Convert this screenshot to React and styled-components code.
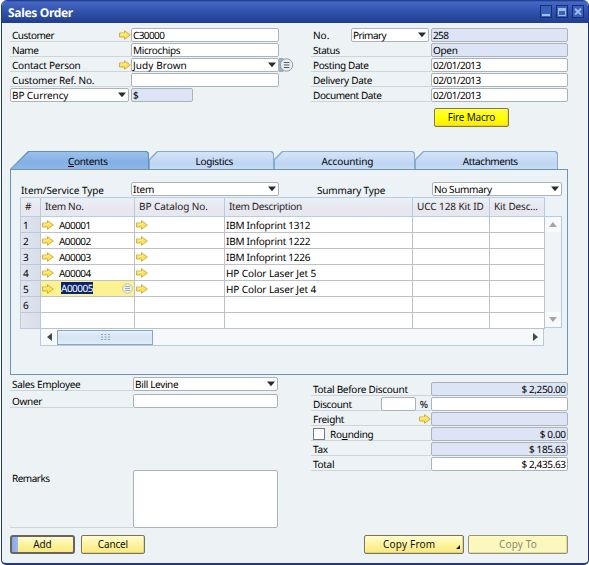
import React from "react";
import styled, { createGlobalStyle, css } from "styled-components";

const Global = createGlobalStyle`
  *, *::before, *::after { box-sizing: border-box; }
  body { margin: 0; background: #fff; overflow: hidden; }
`;

const Window = styled.div`
  width: 588px;
  height: 565px;
  margin-left: 1px;
  display: flex;
  flex-direction: column;
  background: #edf2f5;
  border: 1px solid #22397f;
  border-top: 0;
  border-bottom-width: 2px;
  border-radius: 6px 6px 5px 5px;
  overflow: hidden;
  font-family: "Noto Sans", "Open Sans", sans-serif;
  font-size: 10px;
  line-height: 14px;
  color: #000;
  white-space: nowrap;
  text-rendering: geometricPrecision;
`;

const TitleBar = styled.header`
  height: 23px;
  flex: none;
  display: flex;
  align-items: center;
  justify-content: space-between;
  padding: 2px 4px 0 6px;
  background: linear-gradient(#16307c 0, #4768c4 2px, #3a5cb8 30%, #2c4da4 65%, #213d8e 100%);
`;

const Title = styled.h1`
  margin: 0;
  font-size: 12px;
  line-height: 18px;
  font-weight: 700;
  letter-spacing: -0.32px;
  color: #fff;
`;

const WindowControls = styled.div`
  display: flex;
  gap: 4px;
  margin-top: -2px;
`;

const ControlButton = styled.button`
  width: 12px;
  height: 13px;
  padding: 0;
  display: grid;
  place-items: center;
  border: 1px solid #172f78;
  background: #3a60b8;
  svg { display: block; }
`;

const Text = styled.span`
  letter-spacing: ${(p) => p.$track ?? -0.3}px;
  margin-right: ${(p) => -(p.$track ?? -0.3)}px;
`;

const HeaderSection = styled.section`
  height: 128px;
  flex: none;
  display: flex;
  justify-content: space-between;
  padding: 5px 20px 0 8px;
`;

const LeftForm = styled.div`
  display: grid;
  grid-template-columns: 121px 148px 15px;
  grid-auto-rows: 14px;
  row-gap: 1px;
  align-content: start;
`;

const RightForm = styled.div`
  width: 257px;
  display: flex;
  flex-direction: column;
`;

const RightRow = styled.div`
  display: grid;
  grid-template-columns: 120px 137px;
  height: 14px;
  margin-bottom: 1px;
`;

const Label = styled.label`
  height: 14px;
  display: flex;
  align-items: center;
  justify-content: space-between;
  padding-left: ${(p) => p.$indent ?? 2}px;
  padding-top: 1px;
  line-height: 14px;
  border-bottom: 1px solid ${(p) => (p.$plain ? "transparent" : "#ccd5dc")};
`;

const Field = styled.div`
  height: 14px;
  width: ${(p) => (p.$width ? `${p.$width}px` : "auto")};
  display: flex;
  align-items: center;
  justify-content: ${(p) => (p.$right ? "flex-end" : "flex-start")};
  padding: 0 1px;
  line-height: 12px;
  border: 1px solid #aab3ba;
  border-radius: 2px;
  background: ${(p) => (p.$locked ? "#dce4f5" : "#fff")};
`;

const SelectBox = styled(Field)`
  justify-content: space-between;
`;

const Caret = styled.svg`
  display: block;
  flex: none;
  margin-top: -1px;
`;

const GripButton = styled.div`
  width: 15px;
  height: 14px;
  display: flex;
`;

const NoGroup = styled.div`
  display: flex;
  justify-content: space-between;
  padding-right: 2px;
`;

const buttonFace = {
  yellow: css`background: linear-gradient(#fffbd0, #fdf3a0 50%, #fbe978);`,
  macro: css`background: linear-gradient(#ffff40, #ffff00 55%, #ffe800); border-color: #8a7c1e;`,
  disabled: css`background: #fcf8bd; color: #8b8a6c; border-color: #94937a;`,
};

const PushButton = styled.button`
  width: ${(p) => p.$width}px;
  height: 19px;
  padding: 0 0 2px;
  display: flex;
  align-items: center;
  justify-content: center;
  font: inherit;
  color: #111;
  border: 1px solid #77735a;
  border-radius: 2px;
  ${(p) => buttonFace[p.$face || "yellow"]}
  box-shadow: inset 0 0 0 1px rgba(255, 255, 210, 0.35), inset -1px -1px 0 rgba(120, 105, 30, 0.35);
`;

const DefaultButton = styled(PushButton)`
  border: 2px solid #66655f;
  border-radius: 3px;
  background: linear-gradient(90deg, #88a9e4 0, #9dbaf0 6px, transparent 6px),
    linear-gradient(#fffbd0, #fdf3a0 50%, #fbe978);
  box-shadow: none;
`;

const MenuButton = styled(PushButton)`
  justify-content: space-between;
  padding: 0 3px 2px 18px;
  svg { align-self: flex-end; margin-bottom: 2px; }
`;

const MacroRow = styled.div`
  display: flex;
  padding: 5px 0 0 123px;
`;

const TabBar = styled.nav`
  height: 18px;
  flex: none;
  display: flex;
  margin-left: 8px;
`;

const Tab = styled.div`
  --slant: ${(p) => (p.$active ? "18px" : "8px")};
  --drop: ${(p) => (p.$active ? "100%" : "8px")};
  position: relative;
  width: ${(p) => p.$width}px;
  height: 18px;
  display: flex;
  justify-content: center;
  padding-left: ${(p) => p.$shift || 0}px;
  line-height: 21px;
  isolation: isolate;
  &::before, &::after {
    content: "";
    position: absolute;
    z-index: -1;
    clip-path: polygon(0 var(--drop), var(--slant) 0, calc(100% - 2px) 0, 100% 2px, 100% 100%, 0 100%);
  }
  &::before { inset: 0; background: ${(p) => (p.$active ? "#5f8fbd" : "#86abcd")}; }
  &::after {
    inset: 1px 1px 0 1px;
    background: ${(p) =>
      p.$active ? "linear-gradient(#9cc0eb, #84b0e5 60%, #8fb6e6)" : "linear-gradient(#d5e4f8, #bdd5f3 70%, #c8dcf5)"};
  }
`;

const Panel = styled.section`
  width: 558px;
  height: 206px;
  flex: none;
  margin-left: 8px;
  padding: 12px 5px 0 9px;
  border: 1px solid #6d94b4;
  background: #ecf2f6;
`;

const FilterRow = styled.div`
  display: flex;
  height: 14px;
`;

const FilterLabel = styled(Label)`
  width: ${(p) => p.$width}px;
  padding-top: 1px;
  border-bottom: 0;
`;

const GridArea = styled.div`
  display: flex;
  margin-top: 1px;
`;

const COLUMNS = "20px 94px 90px 188px 77px 55px";

const Grid = styled.div`
  width: 525px;
`;

const GridRows = styled.div`
  border-left: 1px solid #b9cde3;
`;

const HeadRow = styled.div`
  display: grid;
  grid-template-columns: ${COLUMNS};
  height: 20px;
  border-top: 1px solid #b9cde3;
  background: linear-gradient(#eaf0f7, #e9e6ee 55%, #e4e9f2);
`;

const HeadCell = styled.div`
  padding-left: 4px;
  line-height: 17px;
  color: #222;
  border-right: 1px solid #b5cbe4;
  border-bottom: 1px solid #b9cde3;
`;

const BodyRow = styled.div`
  display: grid;
  grid-template-columns: ${COLUMNS};
  height: 16px;
`;

const Cell = styled.div`
  display: flex;
  align-items: center;
  padding-left: 1px;
  line-height: 14px;
  background: ${(p) => (p.$active ? "#fcf292" : "#fff")};
  border-right: 1px solid #bcc2c8;
  border-bottom: 1px solid #bcc2c8;
`;

const RowNumber = styled(Cell)`
  padding-left: 2px;
  background: linear-gradient(90deg, #e3e4ee, #d7deea);
  border-color: #b9c8dc;
`;

const ItemText = styled(Text)`
  margin-left: 5px;
`;

const SelectedText = styled(Text)`
  height: 12px;
  margin: -2px 0 0 7px;
  line-height: 12px;
  background: #0a246a;
  color: #fff;
`;

const CellGrip = styled.svg`
  margin: 0 1px 0 auto;
`;

const VerticalTrack = styled.div`
  width: 17px;
  height: 112px;
  margin-top: 19px;
  display: flex;
  flex-direction: column;
  justify-content: space-between;
  border: 1px solid #b5cbe4;
  border-left: 0;
  background: #f0f4f9;
`;

const TrackEnd = styled.div`
  width: 16px;
  height: 15px;
  display: grid;
  place-items: center;
  background: #f8f9fb;
`;

const HorizontalTrack = styled.div`
  width: 504px;
  height: 17px;
  margin-left: 20px;
  display: flex;
  align-items: center;
  border: 1px solid #b5cbe4;
  border-top: 0;
  background: #f6f8fc;
`;

const TrackGap = styled.div`
  flex: 1;
`;

const Thumb = styled.div`
  width: 96px;
  height: 15px;
  display: grid;
  place-items: center;
  border: 1px solid #8aa6c4;
  background: linear-gradient(#e6effa, #d5e3f4 50%, #e2ecf8);
`;

const FooterSection = styled.section`
  flex: 1;
  display: flex;
  justify-content: space-between;
  padding: 2px 20px 0 8px;
`;

const FooterForm = styled.div`
  display: grid;
  grid-template-columns: 123px 145px;
  grid-template-rows: 14px 14px 58px;
  align-content: start;
  row-gap: 3px;
`;

const RemarksLabel = styled(Label)`
  height: 58px;
  margin-top: 59px;
  align-items: flex-start;
`;

const RemarksBox = styled.div`
  height: 58px;
  margin-top: 59px;
  background: #fff;
  border: 1px solid #aab3ba;
  border-radius: 2px;
`;

const Totals = styled.div`
  width: 257px;
  padding-top: 5px;
`;

const DiscountGroup = styled.div`
  display: flex;
  align-items: center;
  gap: 4px;
  margin-right: 3px;
`;

const CheckLabel = styled.div`
  display: flex;
  align-items: center;
  gap: 5px;
`;

const Checkbox = styled.span`
  width: 12px;
  height: 12px;
  border: 1px solid #777b80;
  background: #fff;
`;

const ButtonBar = styled.footer`
  height: 29px;
  flex: none;
  display: flex;
  justify-content: space-between;
  padding: 1px 20px 0 8px;
`;

const ButtonGroup = styled.div`
  display: flex;
  gap: ${(p) => p.$gap}px;
`;

function LinkArrow() {
  return (
    <svg width="12" height="10" viewBox="0 0 12 10">
      <path d="M.5 3h5V.7L11.3 5 5.5 9.3V7h-5z" fill="#fbe35c" stroke="#cfa63a" strokeWidth=".9" />
      <path d="M1.5 4h5V3" fill="none" stroke="#fff9b8" strokeWidth=".8" />
    </svg>
  );
}

function Select({ children, track, width }) {
  return (
    <SelectBox $width={width}>
      <Text $track={track}>{children}</Text>
      <Caret width="9" height="6" viewBox="0 0 9 6">
        <path d="M0 .5h8L4 5.2z" fill="#262b33" />
      </Caret>
    </SelectBox>
  );
}

function TotalRow({ label, track, value, valueTrack, locked, extra }) {
  return (
    <RightRow>
      <Label>
        {label && <Text $track={track}>{label}</Text>}
        {extra}
      </Label>
      <Field $right $locked={locked}>
        <Text $track={valueTrack}>{value}</Text>
      </Field>
    </RightRow>
  );
}

const dates = [
  ["Posting Date", -0.38],
  ["Delivery Date", -0.28],
  ["Document Date", -0.42],
];

const items = [
  { no: "A00001", name: "IBM Infoprint 1312", track: -0.25 },
  { no: "A00002", name: "IBM Infoprint 1222", track: -0.25 },
  { no: "A00003", name: "IBM Infoprint 1226", track: -0.25 },
  { no: "A00004", name: "HP Color Laser Jet 5", track: -0.1 },
  { no: "A00005", name: "HP Color Laser Jet 4", track: -0.1, active: true },
  {},
  {},
];

export default function App() {
  return (
    <>
      <Global />
      <Window>
        <TitleBar>
          <Title>Sales Order</Title>
          <WindowControls>
            <ControlButton aria-label="Minimize">
              <svg width="10" height="11" viewBox="0 0 10 11"><path d="M1 9h8" stroke="#9dbcf0" strokeWidth="2" /></svg>
            </ControlButton>
            <ControlButton aria-label="Maximize">
              <svg width="10" height="11" viewBox="0 0 10 11">
                <path d="M1.5 2.5h7v7h-7z" fill="none" stroke="#9dbcf0" />
                <path d="M1 3.5h8" stroke="#9dbcf0" strokeWidth="3" />
              </svg>
            </ControlButton>
            <ControlButton aria-label="Close">
              <svg width="10" height="11" viewBox="0 0 10 11"><path d="M2 2.8l6 5.8m0-5.8l-6 5.8" stroke="#9dbcf0" strokeWidth="2" /></svg>
            </ControlButton>
          </WindowControls>
        </TitleBar>

        <HeaderSection>
          <LeftForm>
            <Label><Text $track={-0.5}>Customer</Text><LinkArrow /></Label>
            <Field><Text $track={-0.6}>C30000</Text></Field>
            <span />
            <Label><Text $track={-0.45}>Name</Text></Label>
            <Field><Text $track={-0.38}>Microchips</Text></Field>
            <span />
            <Label><Text $track={-0.22}>Contact Person</Text><LinkArrow /></Label>
            <Select track={0.08}>Judy Brown</Select>
            <GripButton>
              <svg width="15" height="14" viewBox="0 0 15 14">
                <path d="M0 0h4.5v14H0z" fill="#a3adb8" />
                <circle cx="7.6" cy="7" r="6.2" fill="#e9eef3" stroke="#8e9bab" />
                <path d="M4.8 4.5h5.6M4.8 7h5.6M4.8 9.5h5.6" stroke="#4b5662" />
              </svg>
            </GripButton>
            <Label><Text $track={-0.18}>Customer Ref. No.</Text></Label>
            <Field />
            <span />
            <Select width={119} track={-0.1}>BP Currency</Select>
            <Field $locked $width={62}><Text>$</Text></Field>
          </LeftForm>

          <RightForm>
            <RightRow>
              <NoGroup>
                <Label $plain><Text $track={0}>No.</Text></Label>
                <Select width={78} track={-0.55}>Primary</Select>
              </NoGroup>
              <Field $locked><Text $track={-0.6}>258</Text></Field>
            </RightRow>
            <RightRow>
              <Label><Text $track={-0.45}>Status</Text></Label>
              <Field $locked><Text $track={-0.3}>Open</Text></Field>
            </RightRow>
            {dates.map(([label, track]) => (
              <RightRow key={label}>
                <Label><Text $track={track}>{label}</Text></Label>
                <Field><Text $track={-0.55}>02/01/2013</Text></Field>
              </RightRow>
            ))}
            <MacroRow>
              <PushButton $width={75} $face="macro"><Text $track={-0.2}>Fire Macro</Text></PushButton>
            </MacroRow>
          </RightForm>
        </HeaderSection>

        <TabBar>
          <Tab $active $width={139} $shift={17}><Text $track={-0.35}><u>C</u>ontents</Text></Tab>
          <Tab $width={125} $shift={6}><Text $track={-0.35}>Logistics</Text></Tab>
          <Tab $width={141} $shift={6}><Text $track={-0.12}>Accounting</Text></Tab>
          <Tab $width={143} $shift={8}><Text $track={-0.45}>Attachments</Text></Tab>
        </TabBar>
        <Panel>
          <FilterRow>
            <FilterLabel $width={111} $indent={1}><Text $track={-0.06}>Item/Service Type</Text></FilterLabel>
            <Select width={148} track={-0.2}>Item</Select>
            <FilterLabel $width={153} $indent={38}><Text $track={-0.15}>Summary Type</Text></FilterLabel>
            <Select width={130} track={-0.38}>No Summary</Select>
          </FilterRow>
          <GridArea>
            <Grid>
              <GridRows>
                <HeadRow>
                  <HeadCell><Text>#</Text></HeadCell>
                  <HeadCell><Text>Item No.</Text></HeadCell>
                  <HeadCell><Text $track={-0.08}>BP Catalog No.</Text></HeadCell>
                  <HeadCell><Text $track={-0.35}>Item Description</Text></HeadCell>
                  <HeadCell><Text $track={-0.08}>UCC 128 Kit ID</Text></HeadCell>
                  <HeadCell><Text $track={-0.15}>Kit Desc...</Text></HeadCell>
                </HeadRow>
                {items.map((item, i) => (
                  <BodyRow key={i}>
                    <RowNumber><Text>{i < 6 ? i + 1 : ""}</Text></RowNumber>
                    <Cell $active={item.active}>
                      {item.no && <LinkArrow />}
                      {item.active ? (
                        <>
                          <SelectedText $track={-0.5}>{item.no}</SelectedText>
                          <CellGrip width="11" height="11" viewBox="0 0 11 11">
                            <circle cx="5.5" cy="5.5" r="4.8" fill="#edf0dc" stroke="#bfc4b4" />
                            <path d="M3 3.5h5M3 5.5h5M3 7.5h5" stroke="#8f9cb4" strokeWidth=".8" />
                          </CellGrip>
                        </>
                      ) : (
                        <ItemText $track={-0.55}>{item.no}</ItemText>
                      )}
                    </Cell>
                    <Cell>{item.no && <LinkArrow />}</Cell>
                    <Cell><Text $track={item.track}>{item.name}</Text></Cell>
                    <Cell />
                    <Cell />
                  </BodyRow>
                ))}
              </GridRows>
              <HorizontalTrack>
                <TrackEnd>
                  <svg width="5" height="8" viewBox="0 0 5 8"><path d="M5 0v8L0 4z" fill="#3f4a4e" /></svg>
                </TrackEnd>
                <Thumb>
                  <svg width="9" height="6" viewBox="0 0 9 6">
                    <path d="M0 .5h9M0 3h9M0 5.5h9" stroke="#9aa5b3" strokeDasharray="2 1.5" />
                  </svg>
                </Thumb>
                <TrackGap />
                <TrackEnd>
                  <svg width="5" height="8" viewBox="0 0 5 8"><path d="M0 0v8l5-4z" fill="#3f4a4e" /></svg>
                </TrackEnd>
              </HorizontalTrack>
            </Grid>
            <VerticalTrack>
              <TrackEnd>
                <svg width="8" height="5" viewBox="0 0 8 5"><path d="M0 5h8L4 0z" fill="#a3a5a8" /></svg>
              </TrackEnd>
              <TrackEnd>
                <svg width="8" height="5" viewBox="0 0 8 5"><path d="M0 0h8L4 5z" fill="#a3a5a8" /></svg>
              </TrackEnd>
            </VerticalTrack>
          </GridArea>
        </Panel>

        <FooterSection>
          <FooterForm>
            <Label><Text $track={-0.3}>Sales Employee</Text></Label>
            <Select track={-0.34}>Bill Levine</Select>
            <Label><Text $track={-0.3}>Owner</Text></Label>
            <Field />
            <RemarksLabel><Text $track={-0.5}>Remarks</Text></RemarksLabel>
            <RemarksBox />
          </FooterForm>
          <Totals>
            <TotalRow label="Total Before Discount" track={-0.28} value="$ 2,250.00" valueTrack={-0.38} locked />
            <TotalRow
              label="Discount"
              track={-0.35}
              extra={<DiscountGroup><Field $width={35} /><Text>%</Text></DiscountGroup>}
            />
            <TotalRow label="Freight" locked extra={<LinkArrow />} />
            <TotalRow
              locked
              value="$ 0.00"
              valueTrack={-0.38}
              extra={<CheckLabel><Checkbox /><Text $track={-0.28}>Ro<u>u</u>nding</Text></CheckLabel>}
            />
            <TotalRow label="Tax" value="$ 185.63" valueTrack={-0.38} locked />
            <TotalRow label="Total" value="$ 2,435.63" valueTrack={-0.38} />
          </Totals>
        </FooterSection>

        <ButtonBar>
          <ButtonGroup $gap={6}>
            <DefaultButton $width={65}><Text $track={-0.2}>Add</Text></DefaultButton>
            <PushButton $width={64}><Text $track={-0.15}>Cancel</Text></PushButton>
          </ButtonGroup>
          <ButtonGroup $gap={4}>
            <MenuButton $width={100}>
              <Text $track={0.2}>Copy From</Text>
              <svg width="4" height="4" viewBox="0 0 4 4"><path d="M4 0v4H0z" fill="#111" /></svg>
            </MenuButton>
            <PushButton $width={100} $face="disabled"><Text $track={0.15}>Copy To</Text></PushButton>
          </ButtonGroup>
        </ButtonBar>
      </Window>
    </>
  );
}
